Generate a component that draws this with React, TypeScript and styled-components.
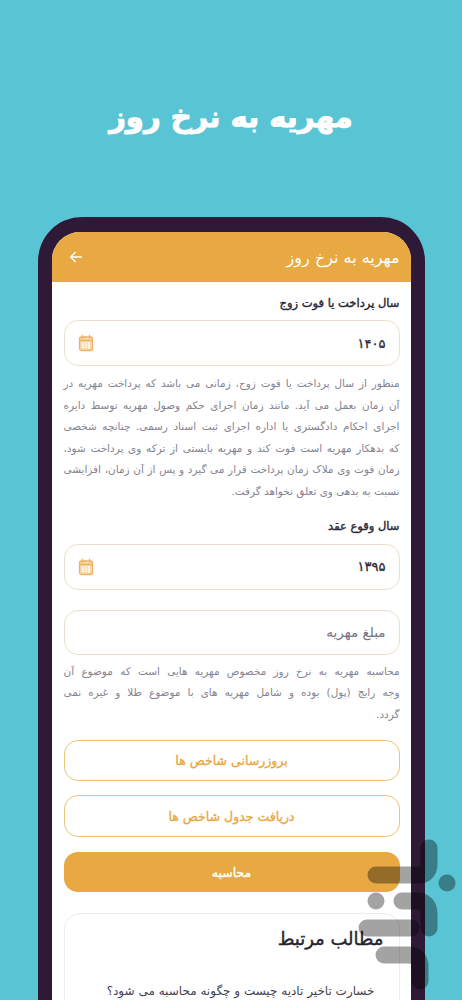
import React from "react";
import styled, { createGlobalStyle } from "styled-components";

const Global = createGlobalStyle`
  html, body { margin: 0; padding: 0; background: #58c4d4; }
  body { font-family: "DejaVu Sans", "Noto Sans", sans-serif; }
  * { box-sizing: border-box; }
`;
const Page = styled.div`
  position: relative; width: 462px; height: 1000px; overflow: hidden;
  background: #58c4d4; display: flex; flex-direction: column; align-items: center;
`;
const Hero = styled.h1`
  margin: 0; height: 217px; padding-top: 92px; width: 100%; text-align: center; direction: rtl;
  color: #fff; font-size: 29px; line-height: 50px; font-weight: 700;
  -webkit-text-stroke: 1px #fff;
`;
const Phone = styled.div`
  width: 387px; flex: 1; background: #2e1a36; padding: 15px 14px 0;
  border-radius: 44px 44px 0 0; overflow: hidden;
`;
const Screen = styled.div`
  height: 100%; background: #fff; border-radius: 28px 28px 0 0; overflow: hidden; direction: rtl;
`;
const Header = styled.header`
  height: 50px; background: #e8a943; color: #fff; display: flex; align-items: center;
  justify-content: space-between; padding: 0 11px 0 16px; font-size: 16px;
`;
const Body = styled.main`
  padding: 11px 11px 0 12px; display: flex; flex-direction: column;
`;
const Label = styled.div<{ $mt?: number }>`
  margin-top: ${(p) => p.$mt ?? 0}px;
  font-size: 11.5px; line-height: 20px; color: #2a2833; height: 20px;
  -webkit-text-stroke: 0.4px #2a2833;
`;
const Field = styled.div<{ $mt: number }>`
  margin-top: ${(p) => p.$mt}px; height: 46px; border: 1px solid #eadfcb; border-radius: 14px;
  display: flex; align-items: center; justify-content: space-between; padding: 0 13px 0 13px;
  font-size: 13px; color: #2a2833; -webkit-text-stroke: 0.3px #2a2833;
`;
const Placeholder = styled(Field)`
  color: #74727f; height: 45px; font-size: 13.5px; -webkit-text-stroke: 0;
`;
const Para = styled.div<{ $mt: number }>`
  margin-top: ${(p) => p.$mt}px; color: #858491; font-size: 10.45px; line-height: 21.6px;
`;
const Line = styled.span<{ $last?: boolean }>`
  display: block; white-space: nowrap; text-align: justify;
  text-align-last: ${(p) => (p.$last ? "right" : "justify")};
`;
const Outline = styled.div<{ $mt: number; $h?: number }>`
  margin-top: ${(p) => p.$mt}px; height: ${(p) => p.$h ?? 41}px; border: 1px solid #f0c27a; border-radius: 14px;
  display: flex; align-items: center; justify-content: center;
  color: #e8a943; font-size: 12.5px; -webkit-text-stroke: 0.35px #e8a943;
`;
const Solid = styled.div`
  margin-top: 15px; height: 40px; background: #e8a943; border-radius: 14px; color: #fff;
  display: flex; align-items: center; justify-content: center; font-size: 12.5px;
  -webkit-text-stroke: 0.35px #fff;
`;
const Card = styled.section`
  margin-top: 21px; height: 200px; border: 1px solid #efecee; border-radius: 16px; padding: 10px 15px;
`;
const CardTitle = styled.h2`
  margin: 0; font-size: 18px; line-height: 30px; color: #262430; font-weight: 400;
  -webkit-text-stroke: 0.4px #262430;
`;
const CardItem = styled.p`
  margin: 27px 0 0; font-size: 12px; line-height: 20px; color: #44424f; padding-right: 9px;
`;
const Watermark = styled.svg`
  position: absolute; left: 350px; top: 835px; width: 112px; height: 165px;
`;

const Arrow = () => (
  <svg width="16" height="16" viewBox="0 0 24 24" fill="none" stroke="#fff" strokeWidth="2" strokeLinecap="round" strokeLinejoin="round">
    <path d="M20 12H4M11 5l-7 7 7 7" />
  </svg>
);
const Calendar = () => (
  <svg width="16" height="18" viewBox="0 0 16 18" fill="none">
    <rect x="1.5" y="3" width="13" height="13.5" rx="2" fill="#f8dcae" stroke="#eeb25f" strokeWidth="1.3" />
    <path d="M1.5 6.5h13" stroke="#eeb25f" strokeWidth="1.6" />
    <path d="M4.5 1v3M11.5 1v3" stroke="#eeb25f" strokeWidth="1.2" strokeLinecap="round" />
    <path d="M4 9h2M7 9h2M10 9h2M4 11.2h2M7 11.2h2M10 11.2h2M4 13.4h2M7 13.4h2M10 13.4h2" stroke="#fff" strokeWidth="1.2" />
  </svg>
);

export default function App() {
  return (
    <Page>
      <Global />
      <Hero>مهریه به نرخ روز</Hero>
      <Phone>
        <Screen>
          <Header>
            <span>مهریه به نرخ روز</span>
            <Arrow />
          </Header>
          <Body>
            <Label>سال پرداخت یا فوت زوج</Label>
            <Field $mt={7}>
              <span>۱۴۰۵</span>
              <Calendar />
            </Field>
            <Para $mt={7}>
              <Line>منظور از سال پرداخت یا فوت زوج، زمانی می باشد که پرداخت مهریه در</Line>
              <Line>آن زمان بعمل می آید. مانند زمان اجرای حکم وصول مهریه توسط دایره</Line>
              <Line>اجرای احکام دادگستری یا اداره اجرای ثبت اسناد رسمی. چنانچه شخصی</Line>
              <Line>که بدهکار مهریه است فوت کند و مهریه بایستی از ترکه وی پرداخت شود،</Line>
              <Line>زمان فوت وی ملاک زمان پرداخت قرار می گیرد و پس از آن زمان، افزایشی</Line>
              <Line $last>نسبت به بدهی وی تعلق نخواهد گرفت.</Line>
            </Para>
            <Label $mt={13}>سال وقوع عقد</Label>
            <Field $mt={8}>
              <span>۱۳۹۵</span>
              <Calendar />
            </Field>
            <Placeholder $mt={20}>مبلغ مهریه</Placeholder>
            <Para $mt={6}>
              <Line>محاسبه مهریه به نرخ روز مخصوص مهریه هایی است که موضوع آن</Line>
              <Line>وجه رایج (پول) بوده و شامل مهریه های با موضوع طلا و غیره نمی</Line>
              <Line $last>گردد.</Line>
            </Para>
            <Outline $mt={15}>بروزرسانی شاخص ها</Outline>
            <Outline $mt={14} $h={42}>دریافت جدول شاخص ها</Outline>
            <Solid>محاسبه</Solid>
            <Card>
              <CardTitle>مطالب مرتبط</CardTitle>
              <CardItem>خسارت تاخیر تادیه چیست و چگونه محاسبه می شود؟</CardItem>
            </Card>
          </Body>
        </Screen>
      </Phone>
      <Watermark viewBox="350 835 112 165" fill="none" stroke="#000" strokeOpacity="0.36" strokeWidth="17" strokeLinecap="round">
        <path d="M429 848V864Q429 875 418 875H376" />
        <path d="M402 901H416Q429 901 429 914V928" />
        <path d="M367 928H411" />
        <path d="M384 955H408Q420 955 420 967V981" />
        <circle cx="447" cy="883" r="8.5" fill="#000" fillOpacity="0.36" stroke="none" />
        <circle cx="376" cy="901" r="8.5" fill="#000" fillOpacity="0.36" stroke="none" />
      </Watermark>
    </Page>
  );
}
